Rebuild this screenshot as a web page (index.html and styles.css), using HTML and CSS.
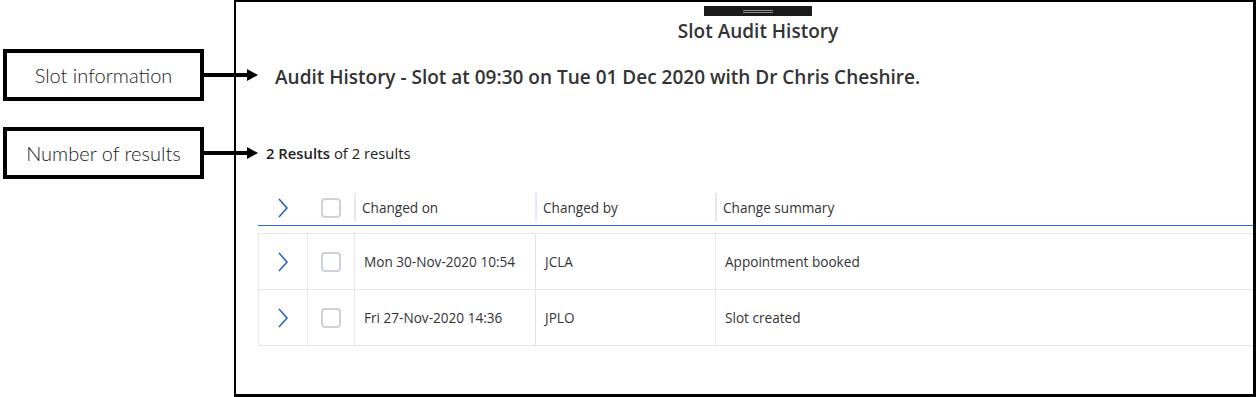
FILE: index.html
```html
<!DOCTYPE html>
<html lang="en">
<head>
<meta charset="UTF-8">
<meta name="viewport" content="width=device-width, initial-scale=1.0">
<title>Slot Audit History</title>
<link rel="stylesheet" href="styles.css">
</head>
<body>
<div class="page">
    <!-- Callouts on the left -->
    <div class="notes">
        <div class="note">
            <div class="noteBox">Slot information</div>
            <svg class="arrow" width="54" height="14" viewBox="0 0 54 14">
                <line x1="0" y1="7" x2="44" y2="7" stroke="#000" stroke-width="4"/>
                <polygon points="43,1 54,7 43,13" fill="#000"/>
            </svg>
        </div>
        <div class="note">
            <div class="noteBox">Number of results</div>
            <svg class="arrow" width="54" height="14" viewBox="0 0 54 14">
                <line x1="0" y1="7" x2="44" y2="7" stroke="#000" stroke-width="4"/>
                <polygon points="43,1 54,7 43,13" fill="#000"/>
            </svg>
        </div>
    </div>

    <div class="panel">
        <div class="top">
            <div class="grip"><span></span><span></span></div>
            <h2 class="title">Slot Audit History</h2>
        </div>

        <h3 class="slotInfo">Audit History - Slot at 09:30 on Tue 01 Dec 2020 with Dr Chris Cheshire.</h3>

        <p class="resultCount"><strong>2 Results</strong> of 2 results</p>

        <div class="auditTable">
            <div class="headRow">
                <div class="cell colExpand"><svg class="chevron" width="10" height="20" viewBox="0 0 10 20"><path d="M1 1 L9 10 L1 19" fill="none" stroke="#1f5dc6" stroke-width="1.5"/></svg></div>
                <div class="cell colCheck"><span class="checkbox"></span></div>
                <div class="headCell colOn">Changed on</div>
                <div class="headCell colBy">Changed by</div>
                <div class="headCell colSummary">Change summary</div>
            </div>

            <div class="rows" id="auditRows"></div>
        </div>
    </div>
</div>
<script>
const audits = [
    { on: "Mon 30-Nov-2020 10:54", by: "JCLA", summary: "Appointment booked" },
    { on: "Fri 27-Nov-2020 14:36", by: "JPLO", summary: "Slot created" }
];

const rows = document.getElementById("auditRows");
audits.forEach(a => {
    const row = document.createElement("div");
    row.classList.add("row");
    row.innerHTML = `
        <div class="cell colExpand"><svg class="chevron" width="10" height="20" viewBox="0 0 10 20"><path d="M1 1 L9 10 L1 19" fill="none" stroke="#1f5dc6" stroke-width="1.5"/></svg></div>
        <div class="cell colCheck"><span class="checkbox"></span></div>
        <div class="cell colOn">${a.on}</div>
        <div class="cell colBy">${a.by}</div>
        <div class="cell colSummary">${a.summary}</div>
    `;
    rows.appendChild(row);
});
</script>
</body>
</html>
```

FILE: styles.css
```css
/* Page */
body {
    margin: 0;
    background: #fff;
    font-family: "Open Sans", "Noto Sans", sans-serif;
    color: #333;
}

.page {
    display: flex;
    width: 1256px;
    height: 397px;
}

/* Callouts */
.notes {
    width: 234px;
    flex-shrink: 0;
    display: flex;
    flex-direction: column;
    gap: 26px;
    padding-top: 49px;
    padding-left: 3px;
    box-sizing: border-box;
}

.note {
    display: flex;
    align-items: center;
}

.noteBox {
    width: 201px;
    height: 52px;
    border: 4px solid #000;
    box-sizing: border-box;
    display: flex;
    align-items: center;
    justify-content: center;
    font-family: "Lato", "DejaVu Sans", sans-serif;
    font-size: 20px;
    font-weight: 300;
    color: #1a1a1a;
    flex-shrink: 0;
}

.arrow {
    flex-shrink: 0;
    position: relative;
    z-index: 1;
}

/* Dialog */
.panel {
    width: 1022px;
    height: 397px;
    border: 2px solid #000;
    border-right-width: 3px;
    border-bottom-width: 3px;
    box-sizing: border-box;
    padding-left: 22px;
    overflow: hidden;
    background: #fff;
}

.top {
    display: flex;
    flex-direction: column;
    align-items: center;
    padding-left: 5px;
}

.grip {
    width: 108px;
    height: 10px;
    margin-top: 4px;
    background: #1b1b1b;
    display: flex;
    flex-direction: column;
    align-items: center;
    justify-content: center;
    gap: 1px;
}

.grip span {
    width: 30px;
    height: 1px;
    background: #8c8c8c;
}

.title {
    margin: 3px 0 0;
    font-size: 19px;
    line-height: 24px;
    font-weight: 600;
    color: #333;
}

.slotInfo {
    margin: 22px 0 0 17px;
    font-size: 19px;
    line-height: 24px;
    font-weight: 600;
    color: #333;
}

.resultCount {
    margin: 54px 0 0 8px;
    font-size: 14.8px;
    line-height: 20px;
    color: #222;
}

.resultCount strong {
    font-weight: 600;
}

/* Table */
.auditTable {
    margin-top: 27px;
    font-size: 13.6px;
    color: #333;
}

.headRow {
    display: flex;
    height: 35px;
    border-bottom: 1.5px solid #2c6bd6;
    margin-bottom: 7px;
}

.headRow .cell {
    border-left-color: transparent;
}

.headCell {
    height: 28px;
    margin-top: 3px;
    border-left: 2px solid #e6e8ee;
    padding-left: 6px;
    display: flex;
    align-items: center;
    box-sizing: border-box;
}

.rows {
    border-top: 1px solid #e3e6ec;
}

.row {
    display: flex;
    height: 56px;
    border-bottom: 1px solid #e3e6ec;
    box-sizing: border-box;
}

.cell {
    border-left: 1px solid #e3e6ec;
    display: flex;
    align-items: center;
    padding-left: 9px;
    box-sizing: border-box;
}

.colExpand {
    width: 49px;
    justify-content: center;
    padding-left: 0;
}

.colCheck {
    width: 47px;
    justify-content: center;
    padding-left: 0;
}

.colOn {
    width: 181px;
}

.colBy {
    width: 180px;
}

.colSummary {
    flex: 1;
}

.checkbox {
    width: 20px;
    height: 20px;
    border: 2px solid #cdd1d9;
    border-radius: 4px;
    box-sizing: border-box;
}

.chevron {
    display: block;
}
```
